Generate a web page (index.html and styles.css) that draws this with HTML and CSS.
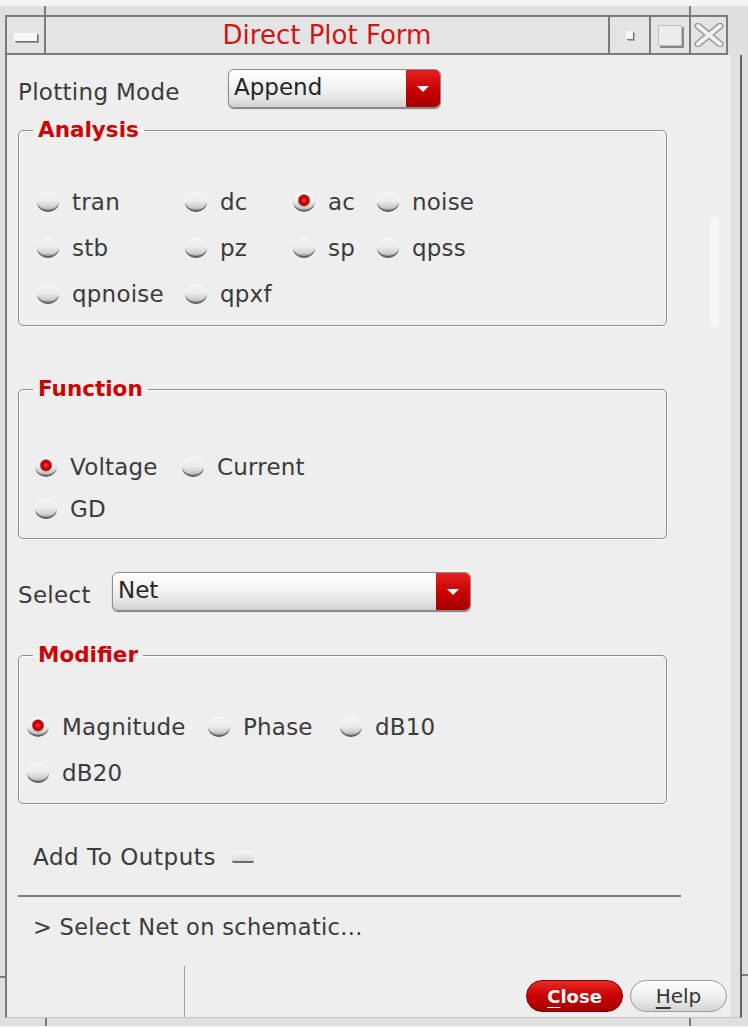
FILE: index.html
```html
<!DOCTYPE html>
<html>
<head>
  <meta charset="utf-8">
  <title>Direct Plot Form</title>
  <link rel="stylesheet" href="styles.css">
</head>
<body>
  <div class="frame">
    <div class="titlebar">
      <div class="tb-btn tb-menu"><span class="menu-bar"></span></div>
      <div class="tb-title">Direct Plot Form</div>
      <div class="tb-btn tb-min"><span class="min-dot"></span></div>
      <div class="tb-btn tb-max"><span class="max-box"></span></div>
      <div class="tb-btn tb-close">
        <svg width="30" height="24" viewBox="0 0 30 24">
          <path d="M4 3 L26 21 M26 3 L4 21" stroke="#9c9c9c" stroke-width="7" stroke-linecap="round" fill="none"/>
          <path d="M4 3 L26 21 M26 3 L4 21" stroke="#f1f1f1" stroke-width="4" stroke-linecap="round" fill="none"/>
        </svg>
      </div>
    </div>

    <div class="dialog">
      <div class="field-row mode-row">
        <span class="label mode-label">Plotting Mode</span>
        <div class="combo mode-combo">
          <span class="combo-text">Append</span>
          <span class="combo-arrow"></span>
        </div>
      </div>

      <fieldset class="group analysis">
        <legend>Analysis</legend>
        <div class="choices analysis-choices">
          <label class="choice"><span class="radio"></span>tran</label>
          <label class="choice"><span class="radio"></span>dc</label>
          <label class="choice"><span class="radio on"></span>ac</label>
          <label class="choice"><span class="radio"></span>noise</label>
          <label class="choice"><span class="radio"></span>stb</label>
          <label class="choice"><span class="radio"></span>pz</label>
          <label class="choice"><span class="radio"></span>sp</label>
          <label class="choice"><span class="radio"></span>qpss</label>
          <label class="choice"><span class="radio"></span>qpnoise</label>
          <label class="choice"><span class="radio"></span>qpxf</label>
        </div>
      </fieldset>

      <fieldset class="group function">
        <legend>Function</legend>
        <div class="choices function-choices">
          <label class="choice"><span class="radio on"></span>Voltage</label>
          <label class="choice"><span class="radio"></span>Current</label>
          <label class="choice"><span class="radio"></span>GD</label>
        </div>
      </fieldset>

      <div class="field-row select-row">
        <span class="label select-label">Select</span>
        <div class="combo select-combo">
          <span class="combo-text">Net</span>
          <span class="combo-arrow"></span>
        </div>
      </div>

      <fieldset class="group modifier">
        <legend>Modifier</legend>
        <div class="choices modifier-choices">
          <label class="choice"><span class="radio on"></span>Magnitude</label>
          <label class="choice"><span class="radio"></span>Phase</label>
          <label class="choice"><span class="radio"></span>dB10</label>
          <label class="choice"><span class="radio"></span>dB20</label>
        </div>
      </fieldset>

      <div class="outputs-row">
        <span class="label outputs-label">Add To Outputs</span>
        <span class="check"></span>
      </div>

      <div class="separator"></div>

      <div class="status">&gt; Select Net on schematic...</div>

      <div class="footer">
        <div class="footer-left"></div>
        <div class="buttons">
          <button class="btn btn-close"><u>C</u>lose</button>
          <button class="btn btn-help"><u>H</u>elp</button>
        </div>
      </div>
      <span class="scroll-hint"></span>
    </div>

    <span class="tick tick-top-l"></span>
    <span class="tick tick-top-r"></span>
    <span class="tick tick-bot-l"></span>
    <span class="tick tick-bot-r"></span>
    <span class="tick tick-side-l"></span>
    <span class="tick tick-side-r"></span>
  </div>
</body>
</html>
```

FILE: styles.css
```css
body {
  margin: 0;
  background: #f4f4f4;
  font-family: "DejaVu Sans", sans-serif;
  color: #3b3b3b;
}
.frame {
  position: relative;
  margin-top: 6px;
  padding: 9px 6px 8px 5px;
  background: #dfdfdf;
}

/* title bar */
.titlebar {
  display: flex;
  width: 723px;
  height: 40px;
  box-sizing: border-box;
  border: 2px solid #7b7b7b;
  background: #e4e4e4;
}
.tb-btn {
  display: flex;
  align-items: center;
  justify-content: center;
  border-left: 2px solid #7b7b7b;
  flex: none;
}
.tb-menu { width: 37px; border-left: none; }
.tb-min { width: 39px; }
.tb-max { width: 38px; }
.tb-close { width: 35px; }
.tb-title {
  width: 562px;
  border-left: 2px solid #7b7b7b;
  text-align: center;
  font-size: 26px;
  line-height: 36px;
  color: #d21414;
}
.menu-bar {
  width: 23px;
  height: 8px;
  margin-top: 3px;
  background: #f7f7f7;
  box-shadow: 1px 1px 0 #6d6d6d, 2px 2px 0 #9a9a9a;
}
.min-dot {
  width: 7px;
  height: 8px;
  background: #f7f7f7;
  box-shadow: 1px 1px 0 #777, 2px 2px 0 #aaa;
}
.max-box {
  width: 22px;
  height: 19px;
  border: 1px solid #bdbdbd;
  background: #ececec;
  box-shadow: 2px 2px 0 #8a8a8a;
}

/* dialog body */
.dialog {
  position: relative;
  width: 737px;
  box-sizing: border-box;
  border-left: 2px solid #7a7a7a;
  border-right: 2px solid #606060;
  border-bottom: 1px solid #c4c4c4;
  padding: 14px 0 0 11px;
  background: #eeeeee;
  box-shadow: inset -9px 0 0 #e0e0e0;
}
.scroll-hint {
  position: absolute;
  left: 703px;
  top: 162px;
  width: 9px;
  height: 110px;
  background: #f6f6f6;
}
.label {
  font-size: 23px;
  line-height: 28px;
  letter-spacing: 0.3px;
  white-space: nowrap;
}
.field-row {
  display: flex;
  align-items: center;
}
.field-row .label { padding-top: 6px; }
.mode-label { width: 210px; }
.select-row { margin-top: 33px; }
.select-label { width: 94px; }

.combo {
  display: flex;
  height: 39px;
  box-sizing: border-box;
  border: 1px solid #8c8c8c;
  border-radius: 6px;
  overflow: hidden;
  background: linear-gradient(#ffffff, #f3f3f3 45%, #e2e2e2 80%, #cdcdcd);
  box-shadow: 0 1px 1px #7a7a7a;
}
.mode-combo { width: 213px; }
.select-combo { width: 359px; }
.combo-text {
  flex: 1;
  padding-left: 5px;
  font-size: 23px;
  line-height: 34px;
  color: #262626;
}
.combo-arrow {
  width: 34px;
  display: flex;
  align-items: center;
  justify-content: center;
  background: linear-gradient(#e52020, #c70000 55%, #a30000);
}
.combo-arrow::before {
  content: "";
  border-left: 6px solid transparent;
  border-right: 6px solid transparent;
  border-top: 6px solid #ffffff;
}

/* framed groups */
.group {
  width: 649px;
  box-sizing: border-box;
  margin: 0;
  padding: 0;
  border: 1px solid #8e8e8e;
  border-radius: 5px;
  box-shadow: 1px 1px 0 #fbfbfb, inset 1px 1px 0 #fbfbfb;
  min-inline-size: 0;
}
.group legend {
  margin-left: 14px;
  padding: 0 5px;
  font-size: 21.5px;
  font-weight: bold;
  line-height: 24px;
  color: #d10000;
}
.analysis { margin-top: 10px; padding-bottom: 8px; }
.function { margin-top: 51px; padding-bottom: 8px; }
.modifier { margin-top: 32px; padding-bottom: 7px; }

.choices { display: grid; justify-content: start; }
.analysis-choices {
  padding: 37px 0 0 18px;
  grid-template-columns: 148px 108px 84px auto;
  grid-auto-rows: 46px;
}
.function-choices {
  padding: 45px 0 0 16px;
  grid-template-columns: 147px auto;
  grid-auto-rows: 42px;
}
.modifier-choices {
  padding: 37px 0 0 8px;
  grid-template-columns: 181px 132px auto;
  grid-auto-rows: 46px;
}
.choice {
  display: flex;
  align-items: center;
  font-size: 23px;
  letter-spacing: 0.2px;
  white-space: nowrap;
}
.radio {
  flex: none;
  width: 22px;
  height: 20px;
  margin-right: 13px;
  border-radius: 50%;
  background: linear-gradient(#f3f3f3, #ececec 45%, #d0d0d0 75%, #8c8c8c);
  box-shadow: inset 0 -3px 1px -1px #5e5e5e, inset 0 1px 1px #fafafa;
}
.radio.on {
  background:
    radial-gradient(circle at 50% 42%, #ff4a4a 0, #d40000 3px, #b00000 5px, rgba(176, 0, 0, 0) 6.5px),
    linear-gradient(#f3f3f3, #ececec 45%, #d0d0d0 75%, #8c8c8c);
}

/* bottom part */
.outputs-row {
  display: flex;
  align-items: center;
  margin: 38px 0 0 15px;
  height: 30px;
}
.outputs-label { letter-spacing: 0.55px; }
.check {
  width: 22px;
  height: 10px;
  margin-left: 16px;
  border-radius: 2px;
  background: linear-gradient(#f6f6f6, #d9d9d9);
  border-bottom: 2px solid #6a6a6a;
}
.separator {
  width: 663px;
  height: 2px;
  margin-top: 23px;
  background: #7d7d7d;
}
.status {
  margin: 15px 0 0 15px;
  font-size: 22.5px;
  line-height: 30px;
  letter-spacing: 0.3px;
}
.footer {
  display: flex;
  margin: 24px 0 0 -11px;
  height: 51px;
}
.footer-left {
  width: 177px;
  border-right: 1px solid #a3a3a3;
}
.buttons {
  margin-left: auto;
  padding: 0 13px 5px 0;
  display: flex;
  align-items: flex-end;
  gap: 7px;
}
.btn {
  width: 97px;
  height: 32px;
  border-radius: 16px;
  font-family: "DejaVu Sans", sans-serif;
  padding: 0;
}
.btn u { text-underline-offset: 4px; }
.btn-close {
  border: 1px solid #7c0000;
  background: linear-gradient(#ea2a2a, #c90000 50%, #a20000);
  color: #ffffff;
  font-size: 18px;
  font-weight: bold;
}
.btn-help {
  border: 1px solid #9c9c9c;
  background: linear-gradient(#ffffff, #f0f0f0 50%, #d3d3d3);
  color: #353535;
  font-size: 20px;
}

/* frame resize markers */
.tick { position: absolute; background: #7d7d7d; }
.tick-top-l { left: 44px; top: 0; width: 2px; height: 9px; }
.tick-top-r { left: 689px; top: 0; width: 2px; height: 9px; }
.tick-bot-l { left: 45px; bottom: 0; width: 2px; height: 8px; }
.tick-bot-r { left: 689px; bottom: 0; width: 2px; height: 8px; }
.tick-side-l { left: 0; top: 970px; width: 5px; height: 2px; }
.tick-side-r { right: 0; top: 968px; width: 6px; height: 2px; }
```
